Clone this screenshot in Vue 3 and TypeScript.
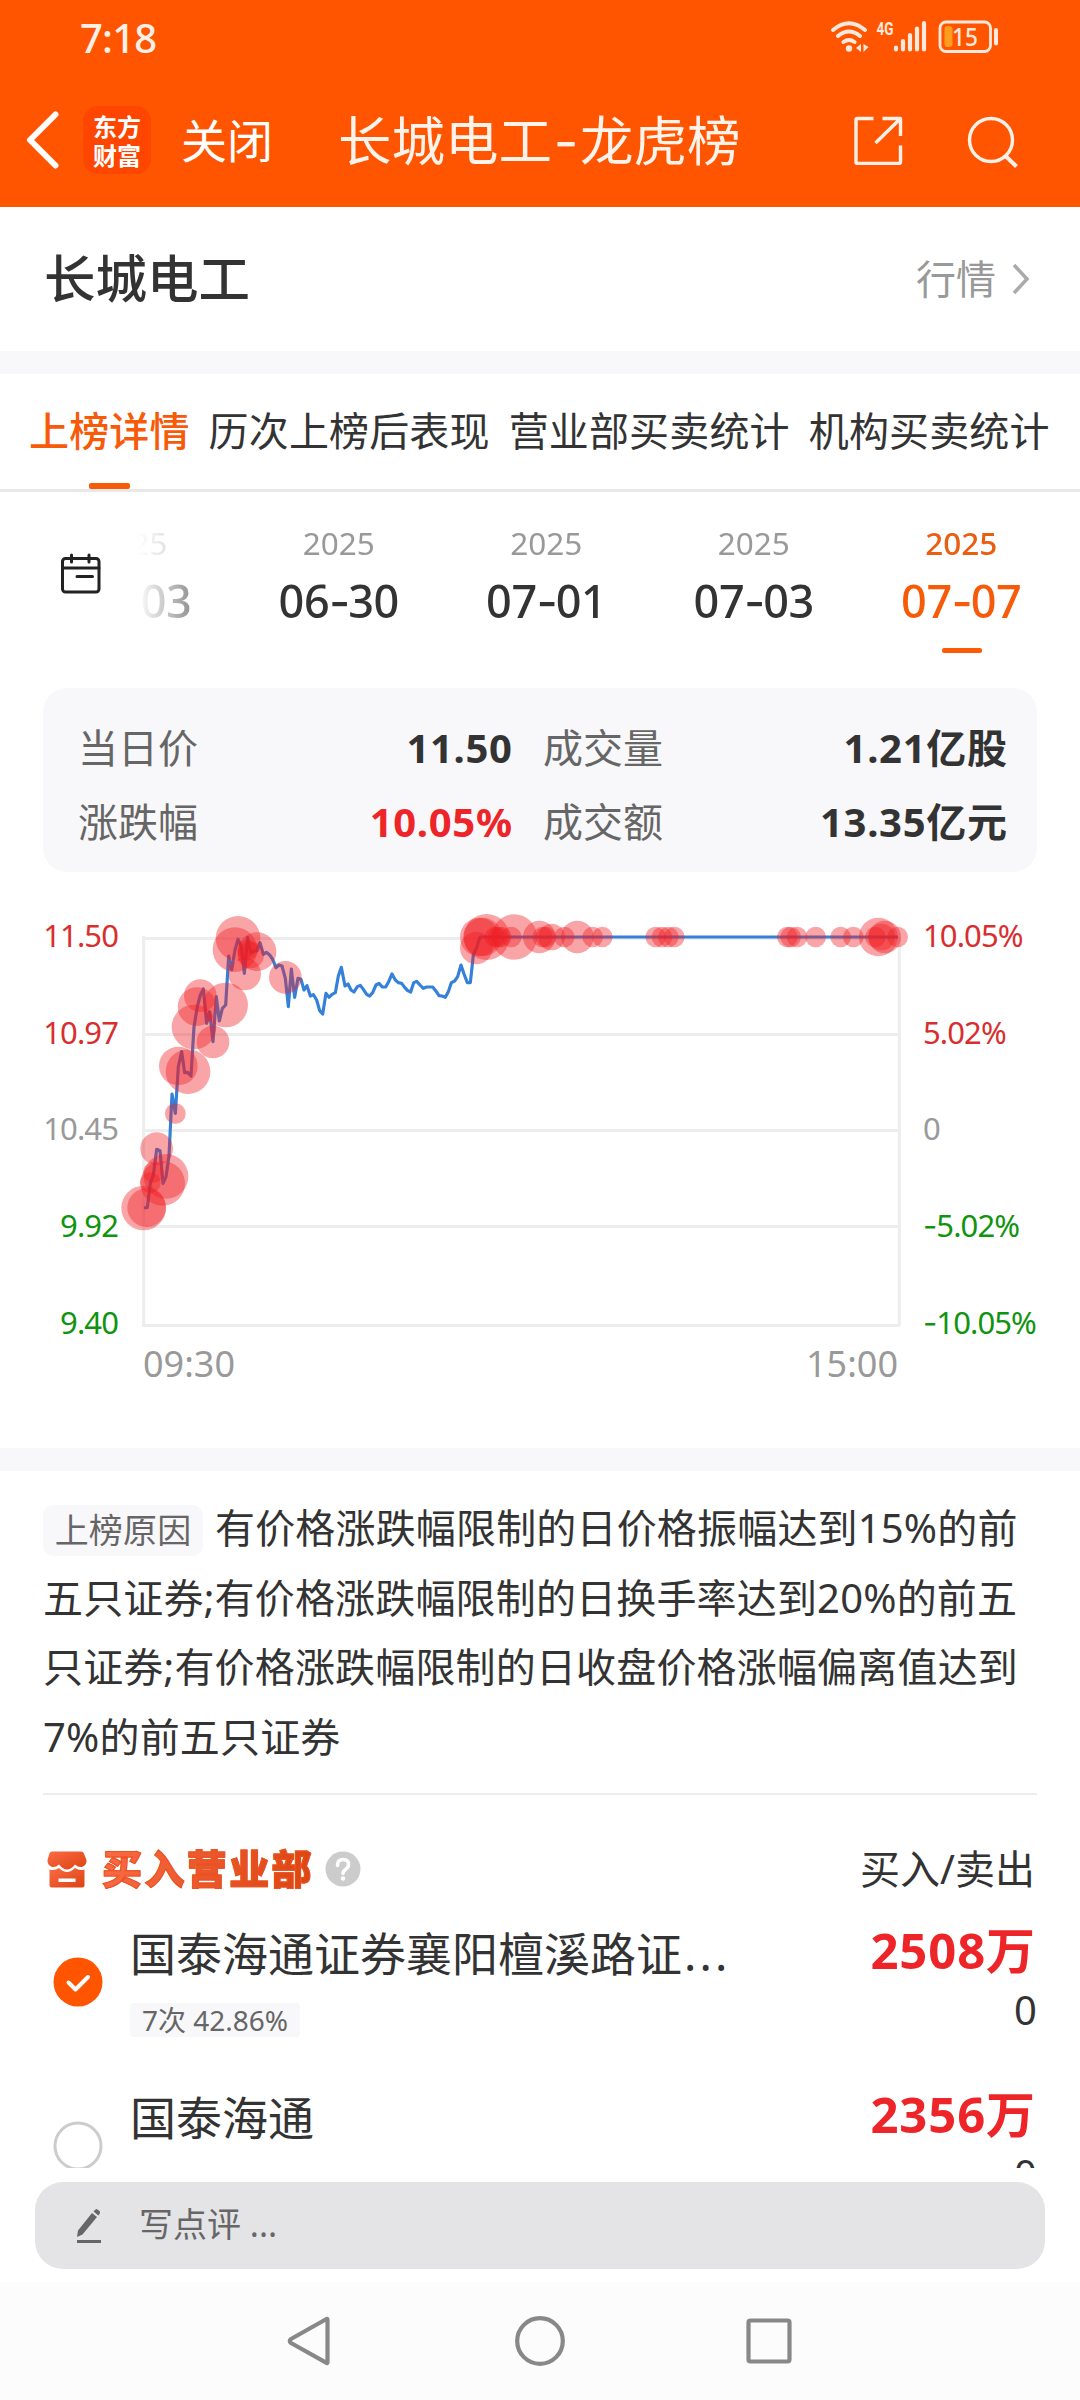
<script setup lang="ts">
interface DateItem {
  year: string
  month: string
  day: string
  active?: boolean
}
interface Dept {
  name: string
  more?: boolean
  tag?: string
  buy: string
  sell: string
  checked: boolean
}
type Bubble = [number, number, number]

const tabs = ['上榜详情', '历次上榜后表现', '营业部买卖统计', '机构买卖统计']

const dates: DateItem[] = [
  { year: '2025', month: '06', day: '03' },
  { year: '2025', month: '06', day: '30' },
  { year: '2025', month: '07', day: '01' },
  { year: '2025', month: '07', day: '03' },
  { year: '2025', month: '07', day: '07', active: true },
]

const stats = [
  { label: '当日价', value: '11.50' },
  { label: '成交量', value: '1.21亿股' },
  { label: '涨跌幅', value: '10.05%', up: true },
  { label: '成交额', value: '13.35亿元' },
]

const priceAxis = [
  { text: '11.50', tone: 'up' },
  { text: '10.97', tone: 'up' },
  { text: '10.45', tone: 'flat' },
  { text: '9.92', tone: 'down' },
  { text: '9.40', tone: 'down' },
]
const rateAxis = [
  { sign: '', text: '10.05%', tone: 'up' },
  { sign: '', text: '5.02%', tone: 'up' },
  { sign: '', text: '0', tone: 'flat' },
  { sign: '-', text: '5.02%', tone: 'down' },
  { sign: '-', text: '10.05%', tone: 'down' },
]

// Intraday price line; chart units are a third of a pixel.
const priceLine =
  '432,924 442,922 451,850 460,825 470,748 480,752 489,850 498,830 507,768 516,582 526,640 535,500 545,455 554,518 563,517 573,528 582,380 592,320 601,285 610,267 620,370 629,335 639,425 649,290 658,363 667,325 677,315 686,168 695,210 705,150 714,118 724,140 733,220 743,113 752,157 762,153 771,153 780,128 790,163 799,157 809,165 818,178 828,203 837,195 846,198 856,235 865,320 874,207 884,292 894,235 903,238 912,270 921,257 931,288 940,284 950,300 959,332 968,342 978,280 987,292 996,283 1006,278 1015,228 1024,202 1035,258 1044,252 1053,270 1062,276 1072,260 1081,256 1090,268 1100,283 1109,288 1118,278 1128,255 1137,250 1147,261 1157,261 1166,245 1176,222 1186,240 1195,248 1205,250 1214,262 1223,272 1232,276 1241,248 1250,244 1260,255 1270,265 1280,261 1298,261 1307,272 1317,287 1326,288 1336,292 1345,275 1354,248 1364,243 1373,230 1383,195 1392,222 1402,248 1411,248 1420,165 1430,142 1440,111 2694,111'

const limitUp = 111
const morning: Bubble[] = [
  [431, 924, 67], [440, 923, 58], [451, 848, 31], [460, 817, 31], [470, 746, 49],
  [488, 850, 67], [498, 829, 67], [526, 641, 31], [535, 498, 58], [564, 515, 67],
  [582, 381, 67], [591, 320, 58], [601, 287, 49], [639, 426, 49], [677, 315, 67],
  [714, 115, 67], [705, 149, 67], [734, 222, 49], [743, 150, 31], [752, 165, 40],
  [771, 155, 58], [856, 232, 49], [1429, 144, 49],
]
const sealed: [number, number][] = [
  [1438, 58], [1448, 58], [1460, 69], [1485, 31], [1494, 31], [1504, 31], [1534, 31],
  [1543, 68], [1618, 49], [1628, 31], [1655, 40], [1637, 31], [1693, 31], [1732, 49],
  [1778, 31], [1807, 31], [1967, 31], [1986, 31], [2005, 31], [2023, 31],
  [2362, 31], [2372, 31], [2391, 31], [2447, 31], [2522, 31], [2560, 31],
  [2626, 31], [2635, 58], [2645, 40], [2654, 49], [2693, 31],
]
const bubbles: Bubble[] = [
  ...morning,
  ...sealed.map(([x, r]): Bubble => [x, limitUp, r]),
]
const gridRows = [115.5, 403.5, 691.5, 979.5, 1276.5]

const reasonLines = [
  '有价格涨跌幅限制的日价格振幅达到15%的前',
  '五只证券;有价格涨跌幅限制的日换手率达到20%的前五',
  '只证券;有价格涨跌幅限制的日收盘价格涨幅偏离值达到',
  '7%的前五只证券',
]

const depts: Dept[] = [
  { name: '国泰海通证券襄阳檀溪路证', more: true, tag: '7次 42.86%', buy: '2508万', sell: '0', checked: true },
  { name: '国泰海通', buy: '2356万', sell: '0', checked: false },
]
</script>

<template>
  <div class="page">
    <header class="top">
      <div class="status">
        <span class="clock">7:18</span>
        <svg class="status-icons" width="172" height="40" viewBox="828 15 172 40" fill="none" stroke="#ffe9dd" stroke-linecap="round">
          <path d="M833 30Q849 16.500 865 30M838 36Q849 27 860 36M843.500 42Q849 38 854.500 42" stroke-width="4" />
          <circle cx="849" cy="48.500" r="3.200" fill="#ffe9dd" stroke="none" />
          <path d="M861 44v8l-5-4zM863.500 44v8l5-5z" fill="#ffe9dd" stroke="none" />
          <text x="876.500" y="35" class="net" textLength="17" lengthAdjust="spacingAndGlyphs">4G</text>
          <path d="M896 47.500v2M903 41v8.500M910 35v14.500M917 28.500v21M924 23v26.500" stroke-width="4.200" />
          <rect x="940" y="22" width="50.500" height="29.500" rx="6" stroke-width="2.800" />
          <rect x="944.500" y="26" width="8" height="21" rx="3" fill="#ff9d1c" stroke="none" />
          <text x="952" y="46" class="batt" textLength="26" lengthAdjust="spacingAndGlyphs">15</text>
          <path d="M996 30v13.500" stroke-width="4" />
        </svg>
      </div>
      <nav class="nav">
        <svg class="back" width="34" height="58" viewBox="0 0 34 58" fill="none" stroke="#fff" stroke-width="6" stroke-linecap="round" stroke-linejoin="round">
          <path d="M29.500 3.500L4 29l25.500 25.500" />
        </svg>
        <div class="logo"><span>东方</span><span>财富</span></div>
        <span class="close">关闭</span>
        <h1 class="nav-title">长城电工<i class="hy">-</i>龙虎榜</h1>
        <svg class="share" width="50" height="50" viewBox="0 0 50 50" fill="none" stroke="#fff1e8" stroke-width="3.400" stroke-linejoin="round">
          <path d="M20.500 3.500H4.500Q3 3.500 3 5v42q0 1.500 1.500 1.500H46q1.500 0 1.500-1.500V30.500M29.500 3.500h18V21M22.500 28L47 4" />
        </svg>
        <svg class="search" width="52" height="52" viewBox="0 0 52 52" fill="none" stroke="#fff1e8" stroke-width="3.400">
          <circle cx="24" cy="24" r="21.500" />
          <path d="M38.500 40L49.500 50.500" stroke-width="4" />
        </svg>
      </nav>
    </header>

    <section class="stock">
      <h2>长城电工</h2>
      <span class="quote">行情</span>
      <svg width="18" height="32" viewBox="0 0 18 32" fill="none" stroke="#aaa" stroke-width="3.500"><path d="M2 2l13 14L2 30" /></svg>
    </section>
    <div class="band"></div>

    <div class="tabs">
      <span v-for="(t, i) in tabs" :key="t" class="tab" :class="{ on: i === 0 }">{{ t }}</span>
    </div>

    <section class="dates">
      <svg class="cal" width="42" height="42" viewBox="0 0 42 42" fill="none" stroke="#222" stroke-width="3" stroke-linecap="round">
        <rect x="2.500" y="5.500" width="36.500" height="33.500" rx="3" />
        <path d="M2.500 15h36.500M11.500 2v7M29 2v7M17 23.500h15.500" />
      </svg>
      <div class="strip">
        <div v-for="(d, i) in dates" :key="i" class="date" :class="{ on: d.active }">
          <span class="year">{{ d.year }}</span>
          <span class="day">{{ d.month }}<i class="hy">-</i>{{ d.day }}</span>
        </div>
      </div>
    </section>

    <section class="card">
      <div v-for="s in stats" :key="s.label" class="stat">
        <span>{{ s.label }}</span><b :class="{ red: s.up }">{{ s.value }}</b>
      </div>
    </section>

    <section class="chart">
      <svg class="plot" width="1080" height="500" viewBox="0 0 3240 1500" fill="none">
        <g stroke="#ededed" stroke-width="9">
          <path v-for="y in gridRows" :key="y" :d="`M427 ${y}H2700`" />
          <path d="M431 108V1281M2698 111V1277" />
        </g>
        <polyline :points="priceLine" stroke="#3580d8" stroke-width="9.500" stroke-linejoin="round" />
        <circle v-for="(b, i) in bubbles" :key="i" :cx="b[0]" :cy="b[1]" :r="b[2]" fill="#f01e23" fill-opacity=".4" />
      </svg>
      <div class="axis left"><span v-for="p in priceAxis" :key="p.text" :class="p.tone">{{ p.text }}</span></div>
      <div class="axis right"><span v-for="r in rateAxis" :key="r.sign + r.text" :class="r.tone"><i v-if="r.sign" class="hy">-</i>{{ r.text }}</span></div>
      <div class="times"><span>09:30</span><span>15:00</span></div>
    </section>
    <div class="band"></div>

    <section class="reason">
      <p v-for="(l, i) in reasonLines" :key="i"><span v-if="i === 0" class="reason-tag">上榜原因</span><span>{{ l }}</span></p>
    </section>

    <section class="depts">
      <div class="dept-head">
        <svg width="40" height="37" viewBox="0 0 40 37">
          <defs>
            <linearGradient id="shop" x1="0" y1="0" x2="1" y2="1"><stop offset="0" stop-color="#fa6a45" /><stop offset="1" stop-color="#dc4410" /></linearGradient>
          </defs>
          <path fill="url(#shop)" d="M5 .5h29q2 0 2.800 1.800L39.500 9q.5 5-4.500 7-4 .5-7-2.500-4 5-8 5t-8-5q-3 3-7 2.500-5-2-4.500-7L2.500 2.300Q3 .5 5 .5z" />
          <path fill="url(#shop)" fill-rule="evenodd" d="M2.500 18.500q5 1.500 9.500-1.500 4 4 8 4t8-4q4.500 3 9.500 1.500V34q0 2.500-2.500 2.500H5Q2.500 36.500 2.500 34zM11.500 27.500v3.500h17v-3.500z" />
        </svg>
        <h3>买入营业部</h3>
        <svg class="help" width="36" height="36" viewBox="0 0 36 36" fill="none">
          <circle cx="18" cy="18" r="17.500" fill="#ccc" />
          <path d="M12.500 14.500q0-6 5.500-6t5.500 5q0 3-3 5-2.500 1.600-2.500 4" stroke="#fff" stroke-width="3.500" stroke-linecap="round" />
          <circle cx="18" cy="27.500" r="2.200" fill="#fff" />
        </svg>
        <span class="io">买入/卖出</span>
      </div>
      <div v-for="d in depts" :key="d.name" class="dept">
        <svg class="radio" width="50" height="50" viewBox="0 0 50 50" fill="none">
          <template v-if="d.checked">
            <circle cx="25" cy="25" r="24.500" fill="#ff5500" />
            <path d="M15.500 25.500l7 7L35 20" stroke="#fff" stroke-width="4" stroke-linecap="round" stroke-linejoin="round" />
          </template>
          <circle v-else cx="25" cy="25" r="23" stroke="#ccc" stroke-width="3" />
        </svg>
        <div class="dept-main">
          <div class="dept-name">{{ d.name }}<span v-if="d.more" class="dots">...</span></div>
          <span v-if="d.tag" class="dept-tag">{{ d.tag }}</span>
        </div>
        <div class="amounts"><b>{{ d.buy }}</b><span>{{ d.sell }}</span></div>
      </div>
    </section>

    <div class="comment">
      <svg width="28" height="36" viewBox="0 0 28 36" fill="#666">
        <path d="M2 29l1-6.500L17 5l5 4L7.500 26.500zM18.500 3.500l2-2q1-.8 2 0l2 1.600q1 1 .3 2.400L23.300 7.500z" />
        <path d="M2 32h24v3H2z" />
      </svg>
      <span>写点评 ...</span>
    </div>

    <footer class="sysnav">
      <svg width="1080" height="118" viewBox="0 0 1080 118" fill="none" stroke="#888" stroke-width="4.200" stroke-linejoin="round">
        <path d="M327.500 37.500v43q0 1-1 .4L291 61q-2.500-2 0-4l35.500-20q1-.5 1 .5z" />
        <circle cx="540" cy="59" r="22.800" />
        <rect x="748.500" y="38.500" width="41" height="41" rx="2" />
      </svg>
    </footer>
  </div>
</template>

<style>
body { margin: 0; background: #fff; }
</style>

<style scoped>
.page {
  width: 1080px;
  height: 2400px;
  display: flex;
  flex-direction: column;
  overflow: hidden;
  background: #fff;
  color: #333;
  font: 400 40px/1 "Noto Sans", "Noto Sans CJK SC", sans-serif;
  white-space: nowrap;
}
.page > * { flex: none; }
h1, h2, h3, p { margin: 0; font-weight: 400; }
svg { display: block; flex: none; }
.hy { font-family: Inter, sans-serif; font-style: normal; }

.top { height: 207px; background: #ff5500; color: #fff; }
.status { height: 75px; display: flex; padding: 0 80px 0 80px; justify-content: space-between; }
.clock { font-size: 40px; line-height: 76px; letter-spacing: -.8px; color: #fff1e8; font-weight: 500; }
.status-icons { margin-top: 15px; }
.net { font: 700 19px Roboto, sans-serif; fill: #ffe9dd; stroke: none; }
.batt { font: 500 25px "Noto Sans", sans-serif; fill: #ffe9dd; stroke: none; }
.nav { height: 132px; display: flex; align-items: center; padding-left: 26px; box-sizing: border-box; }
.back { margin-top: -3px; }
.logo {
  width: 68px; height: 68px; margin: -3px 0 0 23px; border-radius: 15px; background: #ff4600;
  display: flex; flex-direction: column; align-items: center; justify-content: center;
  font: 700 24px/29px "Noto Sans CJK SC", sans-serif;
}
.close { margin-left: 30px; margin-top: -2px; font-size: 46px; line-height: 60px; }
.nav-title { margin-left: 65px; font-size: 53.500px; line-height: 60px; color: #fff3ec; }
.nav-title .hy { display: inline-block; width: 28px; text-align: center; }
.share { margin: -3px 0 0 112px; }
.search { margin: 1px 0 0 64px; }

.stock { height: 144px; display: flex; align-items: center; padding: 0 50px 0 44px; }
.stock h2 { flex: 1; font-size: 51.500px; font-weight: 500; }
.quote { color: #999; margin-right: 16px; }
.band { height: 23px; background: #f8f8fa; }

.tabs { height: 115px; display: flex; gap: 19px; padding-left: 29px; border-bottom: 3px solid #e8e8e8; letter-spacing: .15px; }
.tab { line-height: 114px; height: 115px; position: relative; }
.tab.on { color: #f75a08; font-weight: 500; }
.tab.on::after {
  content: ""; position: absolute; left: 60px; bottom: 0; width: 41px; height: 6px; border-radius: 2px; background: #f75a08;
}

.dates { height: 196px; display: flex; }
.cal { margin: 61px 0 0 60px; }
.strip {
  width: 942px; height: 196px; margin-left: 36px; display: flex; justify-content: flex-end; overflow: hidden;
  box-sizing: border-box; padding-right: 15px;
  -webkit-mask-image: linear-gradient(90deg, transparent 0, #000 100px);
  mask-image: linear-gradient(90deg, transparent 0, #000 100px);
}
.date { flex: none; width: 207.500px; display: flex; flex-direction: column; align-items: center; position: relative; }
.year { margin-top: 33px; font-size: 31.500px; line-height: 36px; color: #999; }
.day { margin-top: 12px; font-size: 45px; line-height: 56px; font-weight: 500; letter-spacing: -.4px; }
.day .hy { display: inline-block; width: 19px; text-align: center; }
.date.on .year { color: #ea5e12; font-weight: 500; }
.date.on .day { color: #f75a08; }
.date.on::after { content: ""; position: absolute; left: 84px; top: 156px; width: 40px; height: 5px; border-radius: 2px; background: #ff5a08; }

.card {
  margin: 0 43px; height: 184px; border-radius: 24px; background: #f8f8fa; box-sizing: border-box;
  padding: 23px 30px 0 35px; display: grid; grid-template-columns: 434px 464px; column-gap: 31px; grid-auto-rows: 74px;
}
.stat { display: flex; justify-content: space-between; line-height: 74px; color: #666; }
.stat b { color: #333; font-weight: 700; letter-spacing: .7px; margin-right: -.7px; }
.stat b.red { color: #ee2528; }

.chart { height: 576px; position: relative; }
.plot { margin-top: 28px; }
.axis { position: absolute; top: 47px; display: flex; flex-direction: column; font-size: 31px; letter-spacing: -.9px; }
.axis span { height: 96.700px; line-height: 32px; }
.axis.left { right: 962px; text-align: right; }
.axis.right { left: 923px; }
.up { color: #d92e2e; }
.flat { color: #999; }
.down { color: #0f940f; }
.times {
  position: absolute; left: 143px; width: 755px; top: 472px; display: flex; justify-content: space-between;
  font-size: 36px; line-height: 40px; color: #999;
}

.reason { padding: 22px 43px 0; height: 300px; }
.reason p { height: 69.500px; line-height: 69.500px; display: flex; align-items: center; letter-spacing: .17px; }
.reason-tag {
  height: 51px; line-height: 51px; width: 160px; text-align: center; margin: 6px 12px 0 0; border-radius: 11px;
  background: #f8f8fa; color: #666; font-size: 34px;
}

.depts { height: 375px; margin: 0 43px; border-top: 2px solid #eee; overflow: hidden; box-sizing: border-box; }
.dept-head { display: flex; align-items: center; height: 114px; padding: 34px 2px 0 4px; box-sizing: border-box; }
.dept-head h3 {
  margin-left: 15px; width: 212px; font-size: 40px; line-height: 46px; font-weight: 900; letter-spacing: 2.400px;
  background: linear-gradient(100deg, #fa6a45, #dc4410); -webkit-background-clip: text; background-clip: text; color: transparent;
  -webkit-text-stroke: 1px #e9521f;
}
.help { margin-left: 11px; }
.io { margin-left: auto; }
.dept { height: 164px; display: flex; }
.radio { margin: 48px 0 0 10px; }
.dept-main { width: 610px; margin-left: 27px; }
.dept-name { margin-top: 14px; font-size: 46px; line-height: 60px; }
.dots { letter-spacing: 3.200px; margin-left: 2px; }
.dept-tag {
  display: inline-block; margin-top: 20px; height: 34px; line-height: 34px; padding: 0 12px; border-radius: 4px;
  background: #f8f8fa; color: #666; font-size: 28px; vertical-align: top;
}
.amounts { margin-left: auto; display: flex; flex-direction: column; align-items: flex-end; }
.amounts b { font-size: 49px; line-height: 60px; margin-top: 11px; margin-right: 1px; letter-spacing: .9px; color: #ee2528; }
.amounts span { line-height: 44px; margin-top: 8px; }

.comment {
  margin: 14px 35px 13px; height: 87px; border-radius: 28px; background: #e4e4e6; color: #666;
  display: flex; align-items: center; padding-left: 40px; box-sizing: border-box; font-size: 34px;
}
.comment span { margin-left: 36px; margin-top: -3px; }
.sysnav { height: 118px; background: #fcfcfc; }
</style>
